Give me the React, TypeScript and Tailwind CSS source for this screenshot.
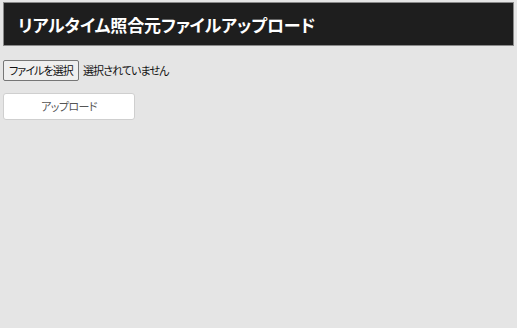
export default function App() {
  const jp = "font-['Noto_Sans_CJK_JP','Noto_Sans',sans-serif] [font-feature-settings:'palt']"

  return (
    <div className={`min-h-[328px] w-full bg-[#e5e5e5] pt-[2px] ${jp}`}>
      <header className="mx-[3px] flex h-[44px] items-center border border-[#8a8a8a] bg-[#1e1e1e] pl-[14px]">
        <h1 className="text-[17px] font-bold leading-none tracking-[-0.1px] text-white">
          リアルタイム照合元ファイルアップロード
        </h1>
      </header>

      <div className="mt-[14px] flex items-center px-[3px]">
        <button className="h-[21px] rounded-[2px] border border-[#767676] bg-[#efefef] px-[5px] text-[11px] leading-none tracking-[-0.9px] text-[#111]">
          ファイルを選択
        </button>
        <span className="ml-[4px] text-[11px] leading-none tracking-[-0.9px] text-[#111]">選択されていません</span>
      </div>

      <div className="mt-[11px] px-[3px]">
        <button className="h-[27px] w-[132px] rounded-[3px] border border-[#cfcfcf] bg-white text-[11px] leading-none tracking-[-0.6px] text-[#555]">
          アップロード
        </button>
      </div>
    </div>
  )
}
